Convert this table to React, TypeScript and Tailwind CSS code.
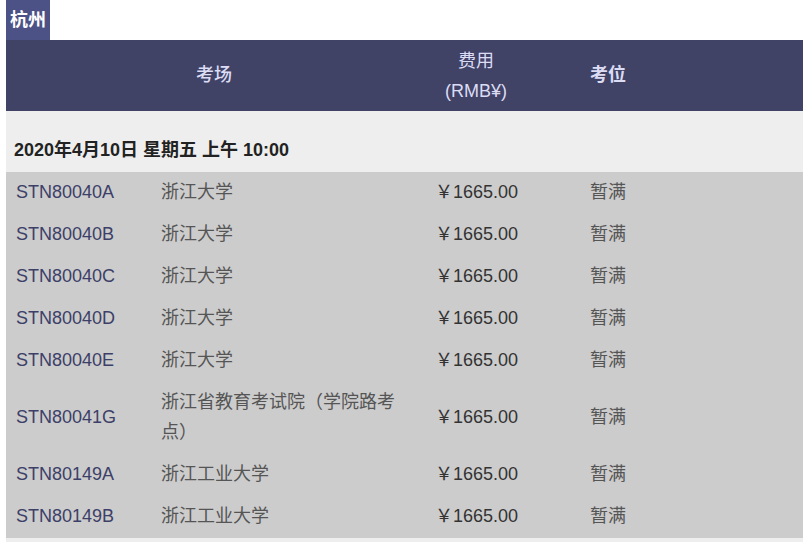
import * as React from "react"

type Row = { code: string; venue: string; fee: string; status: string }

const rows: Row[] = [
  { code: "STN80040A", venue: "浙江大学", fee: "￥1665.00", status: "暂满" },
  { code: "STN80040B", venue: "浙江大学", fee: "￥1665.00", status: "暂满" },
  { code: "STN80040C", venue: "浙江大学", fee: "￥1665.00", status: "暂满" },
  { code: "STN80040D", venue: "浙江大学", fee: "￥1665.00", status: "暂满" },
  { code: "STN80040E", venue: "浙江大学", fee: "￥1665.00", status: "暂满" },
  { code: "STN80041G", venue: "浙江省教育考试院（学院路考点）", fee: "￥1665.00", status: "暂满" },
  { code: "STN80149A", venue: "浙江工业大学", fee: "￥1665.00", status: "暂满" },
  { code: "STN80149B", venue: "浙江工业大学", fee: "￥1665.00", status: "暂满" },
]

function ExamRow({ row }: { row: Row }) {
  return (
    <div className="flex items-center bg-[#cccccc] pt-[5px] pb-[7px] text-[18px] leading-[30px]">
      <div className="w-[145px] shrink-0 pl-[10px] text-[#3c4068]">{row.code}</div>
      <div className="w-[276px] shrink-0 pl-[10px] pr-[26px] text-[#555555]">{row.venue}</div>
      <div className="w-[153px] shrink-0 pl-[8px] text-[#333333]">{row.fee}</div>
      <div className="flex-1 pl-[10px] text-[#555555]">{row.status}</div>
    </div>
  )
}

export default function App() {
  return (
    <div
      className="h-[542px] w-[809px] overflow-hidden bg-white pl-[6px]"
      style={{ fontFamily: '"Liberation Sans", "Noto Sans CJK SC", sans-serif' }}
    >
      <div className="w-[797px]">
        <div className="flex">
          <div className="flex h-[40px] items-center bg-[#4c5186] px-[4px] text-[18px] font-bold text-white">
            杭州
          </div>
        </div>
        <div className="flex h-[71px] items-center bg-[#404366] text-[18px] text-[#dcdcf4]">
          <div className="w-[416px] text-center font-medium">考场</div>
          <div className="flex w-[108px] flex-col items-center leading-[30px]">
            <span>费用</span>
            <span>(RMB¥)</span>
          </div>
          <div className="w-[156px] text-center font-bold">考位</div>
        </div>
        <div className="flex h-[61px] items-end bg-[#eeeeee] pb-[8px] pl-[8px] text-[18px] font-bold leading-[28px] text-[#222222]">
          2020年4月10日 星期五 上午 10:00
        </div>
        {rows.map((r) => (
          <ExamRow key={r.code} row={r} />
        ))}
        <div className="h-[61px] bg-[#eeeeee]" />
      </div>
    </div>
  )
}
